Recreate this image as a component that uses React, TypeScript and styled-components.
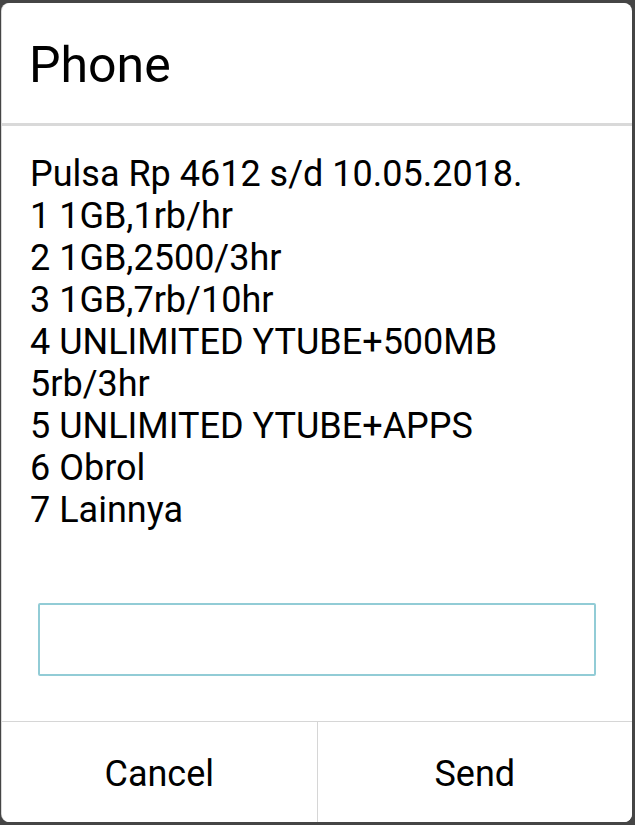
import React from "react";
import styled, { createGlobalStyle } from "styled-components";

const Global = createGlobalStyle`
  html, body { margin: 0; padding: 0; background: #454545; }
  body { font-family: Roboto, "Noto Sans", sans-serif; }
  #root { height: 825px; }
`;

const Screen = styled.div`
  height: 825px;
  box-sizing: border-box;
  padding: 3px 3px 3px 2px;
  display: flex;
`;

const Dialog = styled.div`
  flex: 1;
  background: #ffffff;
  border-radius: 8px;
  display: flex;
  flex-direction: column;
  overflow: hidden;
  box-shadow: -1px 0 0 #d8d8d8;
`;

const Header = styled.div`
  height: 123px;
  display: flex;
  align-items: center;
  padding: 3px 0 0 27px;
  box-sizing: border-box;
  border-bottom: 3px solid #d9d9d9;
`;

const Title = styled.h1`
  margin: 0;
  font-family: Roboto, sans-serif;
  font-weight: 400;
  font-size: 50px;
  color: #000;
`;

const Body = styled.div`
  flex: 1;
  display: flex;
  flex-direction: column;
  padding: 27px 36px 0 28px;
`;

const Message = styled.div`
  font-family: Roboto, sans-serif;
  font-size: 36px;
  line-height: 42px;
  color: #000;
  white-space: pre-line;
`;

const Input = styled.input`
  margin: 72px 0 0 8px;
  height: 73px;
  box-sizing: border-box;
  border: 2px solid #92ccd6;
  border-radius: 2px;
  outline: none;
  font-family: Roboto, sans-serif;
  font-size: 34px;
  padding: 0 12px;
`;

const ButtonRow = styled.div`
  height: 100px;
  display: flex;
  border-top: 1px solid #d6d6d6;
`;

const Button = styled.button<{ $divider?: boolean }>`
  flex: 1;
  background: #fff;
  border: none;
  border-left: ${(p) => (p.$divider ? "1px solid #d6d6d6" : "none")};
  font-family: Roboto, sans-serif;
  font-size: 36px;
  color: #000;
  padding: 3px 0 0;
  display: flex;
  align-items: center;
  justify-content: center;
`;

const text = `Pulsa Rp 4612 s/d 10.05.2018.
1 1GB,1rb/hr
2 1GB,2500/3hr
3 1GB,7rb/10hr
4 UNLIMITED YTUBE+500MB
5rb/3hr
5 UNLIMITED YTUBE+APPS
6 Obrol
7 Lainnya`;

export default function App() {
  return (
    <>
      <Global />
      <Screen>
        <Dialog>
          <Header>
            <Title>Phone</Title>
          </Header>
          <Body>
            <Message>{text}</Message>
            <Input />
          </Body>
          <ButtonRow>
            <Button>Cancel</Button>
            <Button $divider>Send</Button>
          </ButtonRow>
        </Dialog>
      </Screen>
    </>
  );
}
